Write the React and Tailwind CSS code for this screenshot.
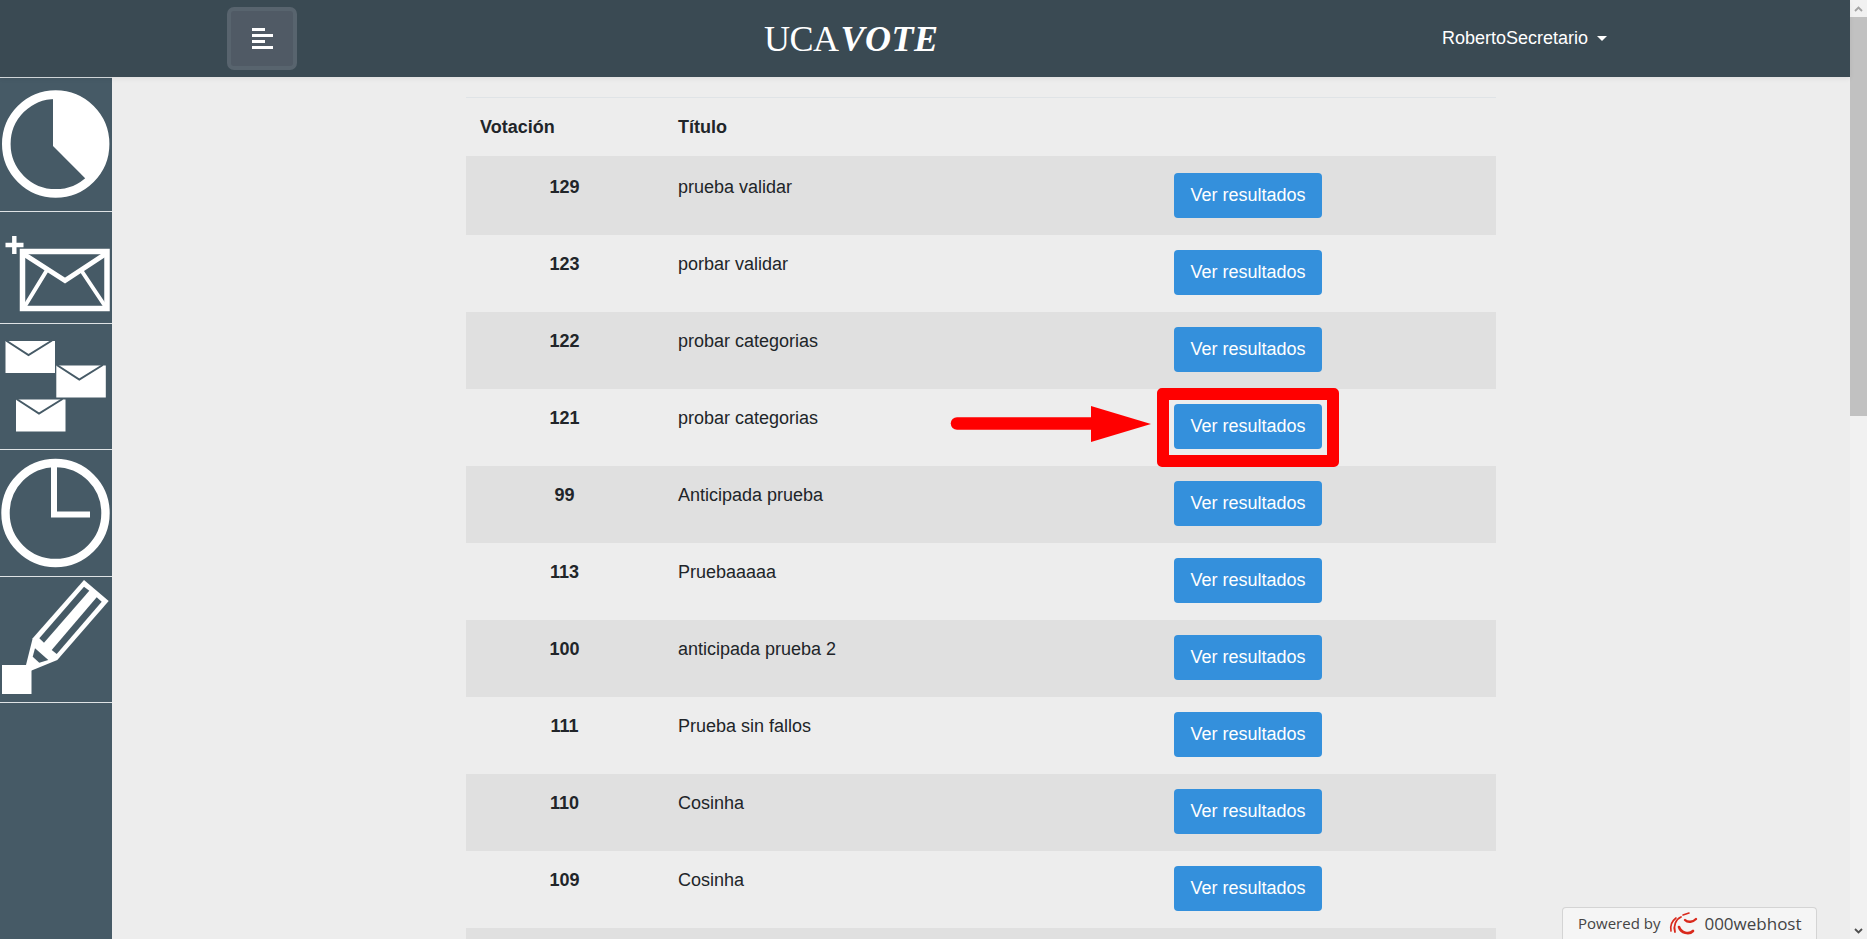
import React from "react";

const rows = [
  ["129", "prueba validar"],
  ["123", "porbar validar"],
  ["122", "probar categorias"],
  ["121", "probar categorias"],
  ["99", "Anticipada prueba"],
  ["113", "Pruebaaaaa"],
  ["100", "anticipada prueba 2"],
  ["111", "Prueba sin fallos"],
  ["110", "Cosinha"],
  ["109", "Cosinha"],
];

function Env({ x, y }) {
  return (
    <g>
      <rect x={x} y={y} width="49.5" height="32" fill="#fff" />
      <path d={`M${x + 0.5} ${y - 0.5}L${x + 23} ${y + 14}L${x + 46.5} ${y - 0.5}`} fill="none" stroke="#465a66" strokeWidth="2" />
    </g>
  );
}

const icons = [
  {
    h: "h-[134px]",
    vb: "0 78 112 133",
    g: (
      <g>
        <circle cx="55.7" cy="144" r="49.4" fill="none" stroke="#fff" strokeWidth="8.6" />
        <path d="M53 146V97.1A47 47 0 0 1 86.4 179.6Z" fill="#fff" />
      </g>
    ),
  },
  {
    h: "h-[112px]",
    vb: "0 212 112 111",
    g: (
      <g fill="none" stroke="#fff">
        <path d="M5.5 245H23.5M14.3 236V254" strokeWidth="4.4" />
        <rect x="22.5" y="251.5" width="84.5" height="57" strokeWidth="5.5" />
        <path d="M22 253L65 280.5L107 253" strokeWidth="5" />
        <path d="M47 270L25 306M81 270L105 306" strokeWidth="4" />
      </g>
    ),
  },
  {
    h: "h-[126px]",
    vb: "0 324 112 125",
    g: (
      <g>
        <Env x={5.5} y={341} />
        <Env x={56.3} y={365.5} />
        <Env x={16} y={399.5} />
      </g>
    ),
  },
  {
    h: "h-[127px]",
    vb: "0 450 112 126",
    g: (
      <g fill="none" stroke="#fff">
        <circle cx="55.5" cy="513" r="50" strokeWidth="8.4" />
        <path d="M54 466V514.5H90" strokeWidth="6" />
      </g>
    ),
  },
  {
    h: "h-[126px]",
    vb: "0 577 112 125",
    g: (
      <g>
        <polygon points="84,580 108.7,601 57.3,660 31,670.7 26,665 32.7,638.3" fill="#fff" />
        <polygon points="84,586.7 89.3,590.7 44,642.7 39.3,638.3" fill="#465a66" />
        <polygon points="96.7,597.3 101.7,601.7 56.7,654 51.7,650" fill="#465a66" />
        <polygon points="35,648.3 32.7,656.7 39.3,662.7 48.3,660" fill="#465a66" />
        <rect x="2" y="665" width="29.5" height="29" fill="#fff" />
      </g>
    ),
  },
];

function Logo000() {
  return (
    <svg width="30" height="25" viewBox="0 0 30 25" fill="none" stroke="#d9291c" strokeLinecap="round">
      <path d="M3 20C2 15 4 10 8 7" strokeWidth="1.6" />
      <path d="M7 21C5 15 8 8 13 6" strokeWidth="1.8" />
      <path d="M11 16C13 22 21 24 25 20" strokeWidth="2.6" />
      <path d="M17 9C20 12 25 11 28 8" strokeWidth="2.4" />
      <path d="M15 4L21 2" strokeWidth="1.6" />
    </svg>
  );
}

export default function App() {
  return (
    <div className="relative flex h-screen w-full overflow-hidden bg-[#ededed] font-['Liberation_Sans',Arial,sans-serif] text-[18px] text-[#212529]">
      <div className="flex min-w-0 flex-1 flex-col">
        <header className="z-10 flex h-[77px] shrink-0 items-center bg-[#3a4a53] pr-[243px] shadow-[0_2px_5px_rgba(0,0,0,0.06)]">
          <button className="ml-[227px] flex h-[63px] w-[70px] flex-col items-start justify-center gap-[3px] rounded-[7px] border-4 border-[#58646e] bg-[#505a65] pl-[21px]">
            <span className="h-[3px] w-[13px] bg-white" />
            <span className="h-[3px] w-[21px] bg-white" />
            <span className="h-[3px] w-[13px] bg-white" />
            <span className="h-[3px] w-[21px] bg-white" />
          </button>
          <div className="ml-[467px] flex items-baseline whitespace-nowrap font-['Liberation_Serif',serif] text-[36px] leading-none text-white">
            <span className="tracking-[-0.5px]">UCA</span>
            <span className="ml-[2px] font-bold italic tracking-[0.5px]">VOTE</span>
          </div>
          <div className="ml-auto flex items-center gap-[9px] text-white">
            <span>RobertoSecretario</span>
            <span className="h-0 w-0 border-x-[5px] border-t-[5px] border-x-transparent border-t-white" />
          </div>
        </header>
        <div className="flex min-h-0 flex-1">
          <aside className="flex w-[112px] shrink-0 flex-col border-t border-[#d8dde0] bg-[#465a66]">
            {icons.map((ic, i) => (
              <div key={i} className={`${ic.h} shrink-0 border-b border-[#dfe3e5]`}>
                <svg className="block h-full w-full" viewBox={ic.vb} preserveAspectRatio="none">
                  {ic.g}
                </svg>
              </div>
            ))}
          </aside>
          <main className="min-w-0 flex-1 overflow-hidden pt-[20px]">
            <table className="mx-auto w-[1030px] table-fixed border-collapse border-t border-[#dfe3e6]">
              <colgroup>
                <col className="w-[200px]" />
                <col className="w-[508px]" />
                <col />
              </colgroup>
              <thead>
                <tr className="h-[58px]">
                  <th className="pl-[14px] pt-[2px] text-left font-bold">Votación</th>
                  <th className="pl-[12px] pt-[2px] text-left font-bold">Título</th>
                  <th />
                </tr>
              </thead>
              <tbody>
                {rows.map(([n, t], i) => (
                  <tr key={n} className={`${i === 0 ? "h-[79px]" : "h-[77px]"} ${i % 2 === 0 ? "bg-[#e0e0e0]" : ""}`}>
                    <td className={`${i === 0 ? "pt-[18px]" : "pt-[16px]"} pr-[3px] text-center align-top font-bold`}>{n}</td>
                    <td className={`${i === 0 ? "pt-[18px]" : "pt-[16px]"} pl-[12px] align-top`}>{t}</td>
                    <td className={`${i === 0 ? "pt-[17px]" : "pt-[15px]"} align-top`}>
                      <button className="h-[45px] w-[148px] rounded-[4px] bg-[#3490dc] text-white">Ver resultados</button>
                    </td>
                  </tr>
                ))}
                <tr className="h-[77px] bg-[#e0e0e0]">
                  <td colSpan={3} />
                </tr>
              </tbody>
            </table>
          </main>
        </div>
      </div>

      <div className="flex w-[17px] shrink-0 flex-col bg-[#f1f1f1]">
        <div className="flex h-[17px] items-center justify-center">
          <svg width="9" height="6" viewBox="0 0 9 6" fill="none" stroke="#a3a3a3" strokeWidth="1.8"><path d="M1 5L4.5 1.5L8 5" /></svg>
        </div>
        <div className="h-[399px] bg-[#c1c1c1]" />
        <div className="flex-1" />
        <div className="flex h-[17px] items-center justify-center">
          <svg width="9" height="6" viewBox="0 0 9 6" fill="none" stroke="#505050" strokeWidth="1.8"><path d="M1 1L4.5 4.5L8 1" /></svg>
        </div>
      </div>

      {/* annotation drawn on top of the screenshot */}
      <div className="pointer-events-none absolute left-[1157px] top-[388px] h-[79px] w-[182px] rounded-[5px] border-[12px] border-[#ff0000]" />
      <svg className="pointer-events-none absolute left-[945px] top-[400px]" width="212" height="48" viewBox="0 0 212 48">
        <path d="M12 23.5H146" stroke="#ff0000" strokeWidth="12.5" strokeLinecap="round" />
        <path d="M146 6L206 24L146 42Z" fill="#ff0000" />
      </svg>

      {/* 000webhost badge */}
      <div className="absolute bottom-0 left-[1562px] flex h-[32px] w-[255px] items-center rounded-t-[4px] border border-b-0 border-[#d4d4d4] bg-[#f5f5f5] pl-[15px] font-['Open_Sans',sans-serif] text-[#444]">
        <span className="text-[15px]">Powered by</span>
        <span className="ml-[8px]"><Logo000 /></span>
        <span className="ml-[6px] text-[17px]">000webhost</span>
      </div>
    </div>
  );
}
